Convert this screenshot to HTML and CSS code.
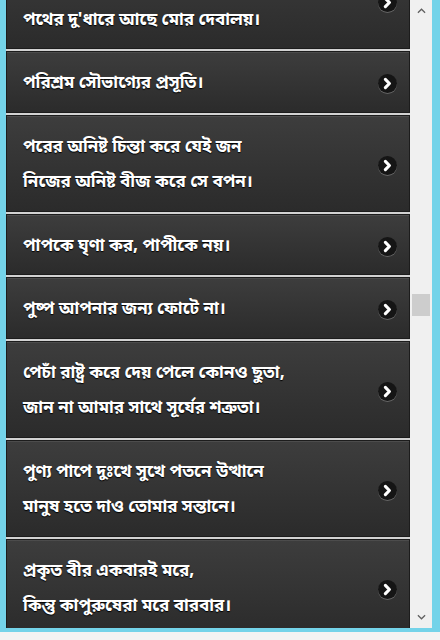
FILE: index.html
```html
<!DOCTYPE html>
<html lang="bn">
<head>
<meta charset="utf-8">
<title>প্রবাদ</title>
<link rel="stylesheet" href="styles.css">
</head>
<body>
<div class="window">
  <div class="pane">
    <div class="viewport">
      <ul class="list">
        <li class="row"><p class="text">মন্দির নয়, মসজিদ নয়,<br>পথের দু'ধারে আছে মোর দেবালয়।</p><span class="go"><svg viewBox="0 0 18 18"><path d="M7 5.2 L10.8 9 L7 12.8"/></svg></span></li>
        <li class="row"><p class="text">পরিশ্রম সৌভাগ্যের প্রসূতি।</p><span class="go"><svg viewBox="0 0 18 18"><path d="M7 5.2 L10.8 9 L7 12.8"/></svg></span></li>
        <li class="row"><p class="text">পরের অনিষ্ট চিন্তা করে যেই জন<br>নিজের অনিষ্ট বীজ করে সে বপন।</p><span class="go"><svg viewBox="0 0 18 18"><path d="M7 5.2 L10.8 9 L7 12.8"/></svg></span></li>
        <li class="row"><p class="text">পাপকে ঘৃণা কর, পাপীকে নয়।</p><span class="go"><svg viewBox="0 0 18 18"><path d="M7 5.2 L10.8 9 L7 12.8"/></svg></span></li>
        <li class="row"><p class="text">পুষ্প আপনার জন্য ফোটে না।</p><span class="go"><svg viewBox="0 0 18 18"><path d="M7 5.2 L10.8 9 L7 12.8"/></svg></span></li>
        <li class="row"><p class="text">পেচাঁ রাষ্ট্র করে দেয় পেলে কোনও ছুতা,<br>জান না আমার সাথে সূর্যের শত্রুতা।</p><span class="go"><svg viewBox="0 0 18 18"><path d="M7 5.2 L10.8 9 L7 12.8"/></svg></span></li>
        <li class="row"><p class="text">পুণ্য পাপে দুঃখে সুখে পতনে উত্থানে<br>মানুষ হতে দাও তোমার সন্তানে।</p><span class="go"><svg viewBox="0 0 18 18"><path d="M7 5.2 L10.8 9 L7 12.8"/></svg></span></li>
        <li class="row"><p class="text">প্রকৃত বীর একবারই মরে,<br>কিন্তু কাপুরুষেরা মরে বারবার।</p><span class="go"><svg viewBox="0 0 18 18"><path d="M7 5.2 L10.8 9 L7 12.8"/></svg></span></li>
      </ul>
    </div>
    <div class="scrollbar">
      <div class="arrow"><svg viewBox="0 0 10 6"><path d="M1 5 L5 1 L9 5"/></svg></div>
      <div class="track"><div class="thumb"></div></div>
      <div class="arrow"><svg viewBox="0 0 10 6"><path d="M1 1 L5 5 L9 1"/></svg></div>
    </div>
  </div>
</div>
<div class="status"></div>
</body>
</html>
```
FILE: styles.css
```css
html, body {
  margin: 0;
  padding: 0;
  width: 440px;
  height: 640px;
  overflow: hidden;
  background: #f3f3f3;
}

.window {
  box-sizing: border-box;
  height: 632px;
  border-left: 6px solid #74d3e9;
  border-right: 8px solid #74d3e9;
  border-bottom: 4px solid #74d3e9;
}

.pane {
  display: flex;
  height: 628px;
}

.viewport {
  flex: 1;
  overflow: hidden;
  background: #d2d2d2;
}

.list {
  list-style: none;
  margin: -48px 0 0;
  padding: 0;
  display: flex;
  flex-direction: column;
  gap: 2px;
}

.row {
  display: flex;
  align-items: center;
  border: 1px solid #1c1c1c;
  background: linear-gradient(#3d3d3d, #2b2b2b);
  box-shadow: inset 0 1px 0 rgba(255, 255, 255, 0.08);
  padding: 14px 12px 10px 16px;
}

.text {
  flex: 1;
  margin: 0;
  font-family: "Noto Sans Bengali", "Noto Serif Bengali", "Lohit Bengali", "Noto Sans", sans-serif;
  font-weight: bold;
  font-size: 17px;
  line-height: 35.5px;
  color: #ffffff;
  text-shadow: 0 1px 1px #000;
}

.go {
  width: 19px;
  height: 19px;
  border-radius: 50%;
  background: #151515;
  box-shadow: 0 1px 0 rgba(255, 255, 255, 0.25);
  display: flex;
}

.go svg {
  width: 19px;
  height: 19px;
  fill: none;
  stroke: #fff;
  stroke-width: 3;
  stroke-linecap: round;
  stroke-linejoin: round;
}

.scrollbar {
  width: 22px;
  display: flex;
  flex-direction: column;
  background: #f0f0f0;
}

.arrow {
  height: 22px;
  display: flex;
  align-items: center;
  justify-content: center;
}

.arrow svg {
  width: 9px;
  height: 6px;
  fill: none;
  stroke: #606060;
  stroke-width: 1.4;
}

.track {
  flex: 1;
  display: flex;
  flex-direction: column;
  padding-top: 272px;
}

.thumb {
  height: 22px;
  margin: 0 2px 0 2px;
  background: #cdcdcd;
}

.status {
  height: 8px;
  background: #f3f3f3;
}
```
